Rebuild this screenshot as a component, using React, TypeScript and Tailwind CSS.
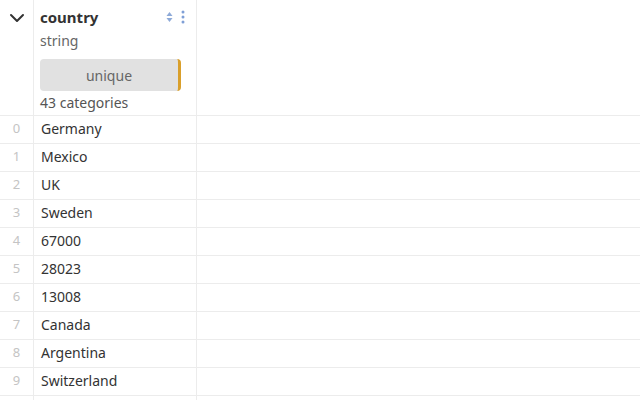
const rows = [
  'Germany',
  'Mexico',
  'UK',
  'Sweden',
  '67000',
  '28023',
  '13008',
  'Canada',
  'Argentina',
  'Switzerland',
  '',
]

function SortIcon() {
  return (
    <svg width="7" height="12" viewBox="0 0 7 12" className="block">
      <path d="M3.5 1 L6.5 5 H0.5 Z" fill="#8eaad8" />
      <path d="M3.5 11 L6.5 7 H0.5 Z" fill="#8eaad8" />
    </svg>
  )
}

function KebabIcon() {
  return (
    <svg width="4" height="14" viewBox="0 0 4 14" className="block">
      <circle cx="2" cy="2" r="1.5" fill="#7f9fd6" />
      <circle cx="2" cy="7" r="1.5" fill="#7f9fd6" />
      <circle cx="2" cy="12" r="1.5" fill="#7f9fd6" />
    </svg>
  )
}

export default function App() {
  return (
    <div
      className="w-[640px] h-[400px] overflow-hidden bg-white text-[#333]"
      style={{ fontFamily: '"Noto Sans", "Open Sans", sans-serif' }}
    >
      {/* header */}
      <div className="flex h-[116px] border-b border-[#ececec]">
        <div className="w-[34px] shrink-0 border-r border-[#ececec] flex justify-center pt-[13px]">
          <svg width="16" height="10" viewBox="0 0 16 10" className="block">
            <path d="M2 2 L8 8 L14 2" fill="none" stroke="#333" strokeWidth="2" strokeLinecap="round" strokeLinejoin="round" />
          </svg>
        </div>
        <div className="w-[163px] shrink-0 border-r border-[#ececec] pl-[6px] pr-[15px] pt-[7px]">
          <div className="flex items-center h-5 w-[145px]">
            <span className="text-[15px] font-bold text-[#333] flex-1 leading-5">country</span>
            <div className="flex items-center gap-[8px]">
              <SortIcon />
              <KebabIcon />
            </div>
          </div>
          <div className="mt-[4px] h-5 leading-5 text-[14px] text-[#666]">string</div>
          <div className="mt-[8px] h-[32px] w-[141px] rounded-[4px] bg-[#e1e1e1] border-r-[3px] border-[#d99f2b] flex items-center justify-center text-[14px] text-[#666]">
            unique
          </div>
          <div className="mt-[2px] h-[20px] leading-[20px] text-[14px] text-[#555]">43 categories</div>
        </div>
        <div className="flex-1" />
      </div>

      {/* rows */}
      {rows.map((name, i) => (
        <div key={i} className="flex h-[28px] border-b border-[#ececec]">
          <div className="w-[34px] shrink-0 border-r border-[#ececec] flex items-center justify-center text-[13px] text-[#c4c4c4] pb-[2px]">
            {name ? i : ''}
          </div>
          <div className="w-[163px] shrink-0 border-r border-[#ececec] flex items-center pl-[7px] text-[14px] text-[#333] pb-[2px]">
            {name}
          </div>
          <div className="flex-1" />
        </div>
      ))}
    </div>
  )
}
